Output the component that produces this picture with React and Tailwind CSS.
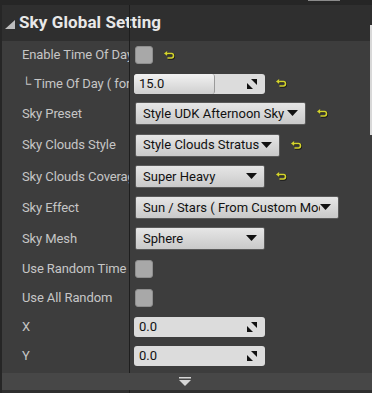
import React from "react";

const font = { fontFamily: "Roboto, 'Liberation Sans', sans-serif" };

function ResetIcon() {
  return (
    <svg width="11" height="9" viewBox="0 0 11 9" className="shrink-0">
      <path d="M3 2.5 H7.5 Q9.5 2.5 9.5 4.75 Q9.5 7 7.5 7 H3.5" fill="none" stroke="#1a1a1a" strokeWidth="2.2" transform="translate(0.6 0.6)" />
      <polygon points="0.6,3.1 3.8,0.6 3.8,5.6" fill="#1a1a1a" />
      <path d="M3 2.5 H7.5 Q9.5 2.5 9.5 4.75 Q9.5 7 7.5 7 H3.5" fill="none" stroke="#d4d42c" strokeWidth="1.6" />
      <polygon points="0,2.5 3.2,0 3.2,5" fill="#d4d42c" />
    </svg>
  );
}

function DragIcon() {
  return (
    <svg width="10" height="10" viewBox="0 0 10 10">
      <polygon points="4,0 10,0 10,6" fill="#111" />
      <polygon points="0,4 0,10 6,10" fill="#111" />
    </svg>
  );
}

function Caret() {
  return (
    <svg width="11" height="7" viewBox="0 0 11 7" className="shrink-0">
      <polygon points="0,0 11,0 5.5,6" fill="#111" />
    </svg>
  );
}

function Checkbox() {
  return <div className="w-[18px] h-[18px] rounded-[3px] bg-[#a8a8a8] border border-[#8e8e8e]" />;
}

function NumberBox({ value, fill }) {
  return (
    <div className="relative -ml-[1px] w-[131px] h-[20px] rounded-[3px] bg-[#dcdcdc] flex items-center overflow-hidden">
      {fill && (
        <div className="absolute left-0 top-0 bottom-0 w-[81px] rounded-[3px] bg-gradient-to-b from-[#f2f2f2] to-[#cfcfcf] border-r border-[#9a9a9a]" />
      )}
      <span className="relative pl-[5px] text-[13px] text-[#111] flex-1">{value}</span>
      <span className="relative pr-[8px] flex items-center">
        <DragIcon />
      </span>
    </div>
  );
}

function Dropdown({ text, width }) {
  return (
    <div
      className={`${width} h-[23px] rounded-[2px] border border-[#5a5a5a] bg-gradient-to-b from-[#e6e6e6] to-[#c9c9c9] flex items-center pl-[7px] pr-[7px] overflow-hidden`}
    >
      <span className="text-[13px] text-[#111] whitespace-nowrap overflow-hidden flex-1">{text}</span>
      <Caret />
    </div>
  );
}

function Row({ label, h, children }) {
  return (
    <div className={`flex ${h}`}>
      <div className="w-[128px] shrink-0 flex items-center pl-[20px] overflow-hidden">
        <span className="text-[13px] text-[#c6c6c6] whitespace-nowrap tracking-[-0.1px]">{label}</span>
      </div>
      <div className="flex items-center gap-[11px] pl-[5px]">{children}</div>
    </div>
  );
}

export default function App() {
  return (
    <div className="w-[372px] h-[393px] bg-[#262626] overflow-hidden" style={font}>
      <div className="h-[5px] flex justify-end pr-[32px]">
        <div className="w-[32px] h-[1px] bg-[#8a8a8a]" />
      </div>
      <div className="relative ml-[2px] bg-[#3d3d3d]">
        <div className="absolute left-[127px] top-0 h-[368px] w-[1px] bg-[#1e1e1e]" />
        <div className="absolute right-0 top-[20px] h-[110px] w-[2px] bg-[#d8d8d8]" />
        <div className="h-[36px] bg-[#2f2f2f] flex items-center pl-[3px]">
          <svg width="10" height="9" viewBox="0 0 10 9" className="mr-[4px] mt-[3px]">
            <polygon points="10,0 10,9 0,9" fill="#bdbdbd" />
          </svg>
          <span className="text-[17px] font-bold text-[#e8e8e8] tracking-[0.1px]">Sky Global Setting</span>
        </div>
        <div>
          <Row label="Enable Time Of Day" h="h-[28px]">
            <Checkbox />
            <ResetIcon />
          </Row>
          <Row label="└ Time Of Day ( for" h="h-[29px]">
            <NumberBox value="15.0" fill />
            <ResetIcon />
          </Row>
          <Row label="Sky Preset" h="h-[31px]">
            <Dropdown text="Style UDK Afternoon Sky" width="w-[171px]" />
            <ResetIcon />
          </Row>
          <Row label="Sky Clouds Style" h="h-[32px]">
            <Dropdown text="Style Clouds Stratus" width="w-[145px]" />
            <ResetIcon />
          </Row>
          <Row label="Sky Clouds Coverage" h="h-[31px]">
            <Dropdown text="Super Heavy" width="w-[130px]" />
            <ResetIcon />
          </Row>
          <Row label="Sky Effect" h="h-[31px]">
            <Dropdown text="Sun / Stars ( From Custom Moon )" width="w-[204px]" />
          </Row>
          <Row label="Sky Mesh" h="h-[31px]">
            <Dropdown text="Sphere" width="w-[130px]" />
          </Row>
          <Row label="Use Random Time" h="h-[29px]">
            <Checkbox />
          </Row>
          <Row label="Use All Random" h="h-[29px]">
            <Checkbox />
          </Row>
          <Row label="X" h="h-[29px]">
            <NumberBox value="0.0" />
          </Row>
          <Row label="Y" h="h-[29px]">
            <NumberBox value="0.0" />
          </Row>
          <div className="h-[3px]" />
        </div>
      </div>
      <div className="ml-[2px] h-[17px] bg-[#474747] flex items-center justify-center">
        <svg width="12" height="9" viewBox="0 0 12 9" className="ml-[-4px]">
          <rect x="0" y="0" width="12" height="1.5" fill="#d6d6d6" />
          <polygon points="0,3 12,3 6,9" fill="#d6d6d6" />
        </svg>
      </div>
      <div className="ml-[2px] h-[5px] bg-[#2f2f2f] flex">
        <div className="ml-[127px] w-[1px] bg-[#1e1e1e]" />
      </div>
    </div>
  );
}
